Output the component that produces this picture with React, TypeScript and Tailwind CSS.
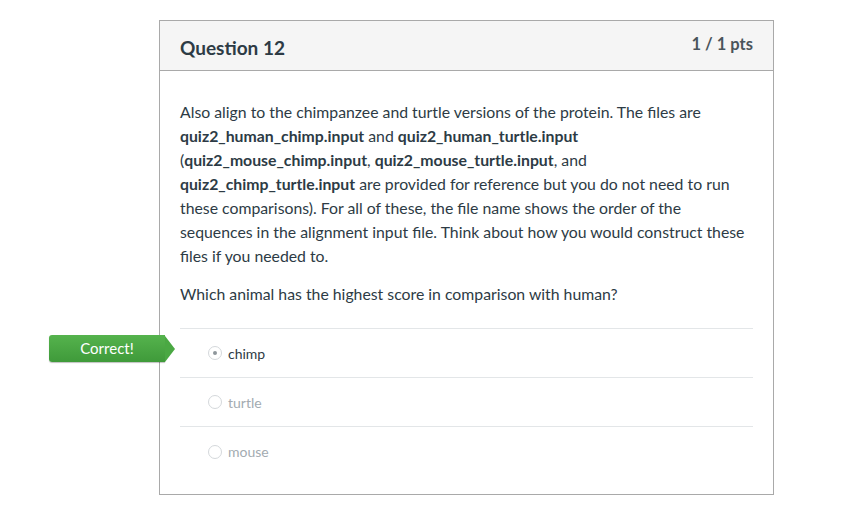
import React from 'react';

const answers = [
  { label: 'chimp', selected: true },
  { label: 'turtle', selected: false },
  { label: 'mouse', selected: false }
];

function Radio({ checked }: { checked: boolean }) {
  return (
    <span className="flex h-[14px] w-[14px] items-center justify-center rounded-full border border-[#d4d8db] bg-white">
      {checked && <span className="h-[4px] w-[4px] rounded-full bg-[#8e969b]" />}
    </span>
  );
}

export default function App() {
  return (
    <div className="min-h-screen bg-white pl-[159px] pt-[20px] font-['Lato','Liberation_Sans',sans-serif] text-[#2d3b45]">
      <div className="relative w-[615px] border border-[#a9a9a9]">
        <div className="flex h-[50px] items-start justify-between border-b border-[#a9a9a9] bg-[#f5f5f5] px-5">
          <h2 className="mt-[14px] text-[19px] font-bold leading-[26px]">Question 12</h2>
          <span className="mt-[12px] text-[16.5px] font-bold leading-[22px] text-[#4a545b]">1 / 1 pts</span>
        </div>

        <div className="px-5 pb-[18px] pt-[29px]">
          <p className="text-[15.8px] leading-[24px]">
            Also align to the chimpanzee and turtle versions of the protein. The files are{' '}
            <strong>quiz2_human_chimp.input</strong> and <strong>quiz2_human_turtle.input</strong>{' '}
            (<strong>quiz2_mouse_chimp.input</strong>, <strong>quiz2_mouse_turtle.input</strong>, and{' '}
            <strong>quiz2_chimp_turtle.input</strong> are provided for reference but you do not need to run these
            comparisons). For all of these, the file name shows the order of the sequences in the alignment input
            file. Think about how you would construct these files if you needed to.
          </p>
          <p className="mt-[14px] text-[15.8px] leading-[24px]">Which animal has the highest score in comparison with human?</p>

          <div className="relative mt-[22px] border-t border-[#e3e6e8]">
            {answers.map((a, i) => (
              <div
                key={a.label}
                className={`flex h-[49px] items-center gap-[6px] pl-7 ${i < answers.length - 1 ? 'border-b border-[#e3e6e8]' : ''}`}
              >
                <Radio checked={a.selected} />
                <span className={`text-[14px] ${a.selected ? 'text-[#2d3b45]' : 'text-[#a3abb1]'}`}>{a.label}</span>
              </div>
            ))}
          </div>
        </div>

        <div className="absolute left-[-111px] top-[314px] flex h-[27px] items-center">
          <div className="flex h-full w-[116px] items-center justify-center rounded-l-[3px] bg-gradient-to-b from-[#55b34d] to-[#3f9a3a] text-[15px] leading-none text-white shadow-[0_1px_1px_rgba(0,0,0,0.25)]">
            Correct!
          </div>
          <div className="h-0 w-0 border-y-[13.5px] border-l-[10px] border-y-transparent border-l-[#4aa843]" />
        </div>
      </div>
    </div>
  );
}
